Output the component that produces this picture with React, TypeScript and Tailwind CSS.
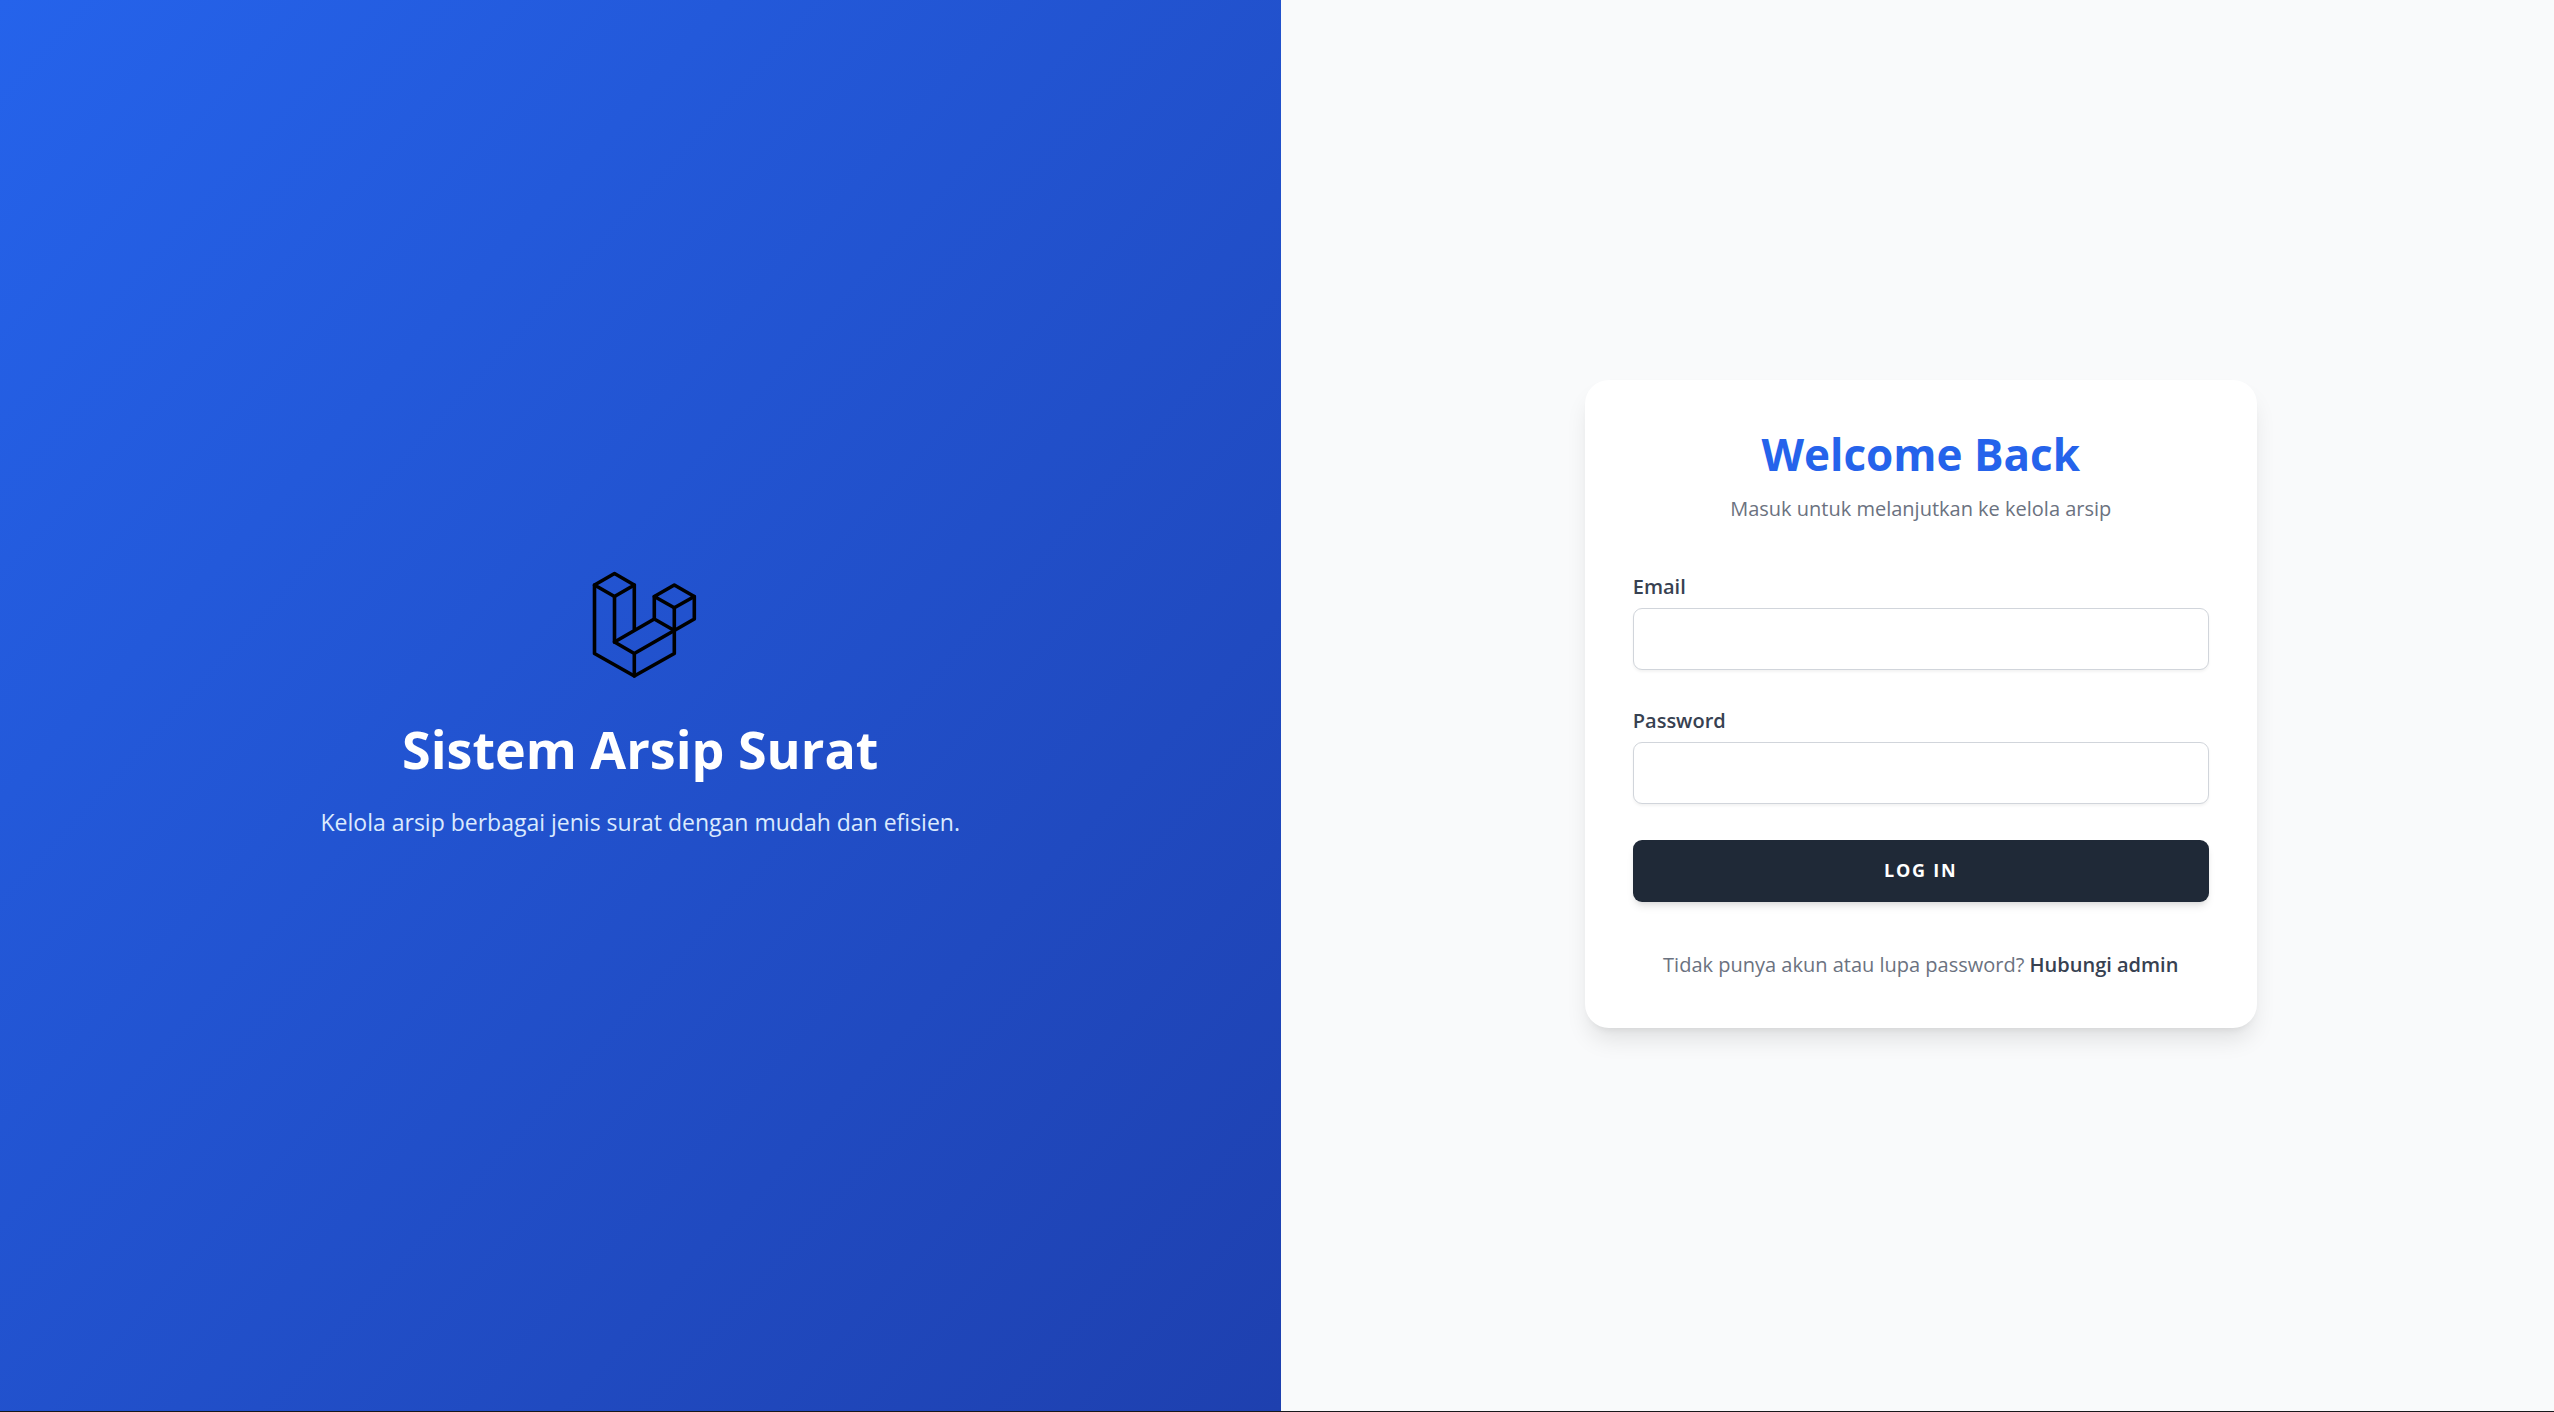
import React from "react";

function Logo() {
  return (
    <svg
      className="h-30 w-30"
      viewBox="0 0 120 120"
      fill="none"
      stroke="#000"
      strokeWidth="3.6"
      strokeLinecap="round"
      strokeLinejoin="round"
      aria-hidden="true"
    >
      <path d="M14.5 20 34.5 8.5 54.3 20 34.5 31.5Z" />
      <path d="M14.5 20V88.5L54.3 111 94.3 88.5V65.5" />
      <path d="M34.5 31.5V77L54.3 88.5V111M54.3 88.5 94.3 65.5" />
      <path d="M54.3 20V65.5M34.5 77 74.3 54" />
      <path d="M74.3 31.5 94.3 20 114.3 31.5 94.3 42.8Z" />
      <path d="M74.3 31.5V54L94.3 65.5 114.3 54V31.5M94.3 42.8V65.5" />
    </svg>
  );
}

function Field({ id, label, type }: { id: string; label: string; type: string }) {
  return (
    <div className="mb-9">
      <label htmlFor={id} className="mb-1.5 block text-[20px] leading-[30px] font-semibold text-[#374151]">
        {label}
      </label>
      <input
        id={id}
        name={id}
        type={type}
        className="block h-[62px] w-full rounded-[9px] border border-[#d1d5db] bg-white px-4 text-[20px] text-[#111827] shadow-[0_2px_3px_0_rgba(0,0,0,0.05)] outline-none focus:border-[#2563eb]"
      />
    </div>
  );
}

export default function App() {
  return (
    <div className="overflow-hidden border-b border-[#18181b] bg-[#f9fafb] font-['Segoe_UI','Open_Sans',sans-serif]">
      <main className="grid min-h-[calc(100vh-1px)] w-[calc(100%+7px)] grid-cols-2">
        <section className="flex flex-col items-center justify-center bg-linear-to-br/srgb from-[#2563eb] to-[#1e40af] px-12 pb-1 text-center">
          <Logo />
          <h1 className="mt-8 text-[52px] leading-[64px] font-bold text-white">Sistem Arsip Surat</h1>
          <p className="mt-5 text-[23px] leading-[42px] text-[#dbeafe]">
            Kelola arsip berbagai jenis surat dengan mudah dan efisien.
          </p>
        </section>

        <section className="flex items-center justify-center bg-[#f9fafb] pb-1">
          <div className="w-full max-w-2xl rounded-3xl bg-white p-12 shadow-[0_15px_23px_-4px_rgba(0,0,0,0.1),0_6px_9px_-6px_rgba(0,0,0,0.1)]">
            <div className="mb-12 text-center">
              <h2 className="text-[44px] leading-[52px] font-bold text-[#2563eb]">Welcome Back</h2>
              <p className="mt-3.5 text-[20px] leading-[30px] text-[#6b7280]">
                Masuk untuk melanjutkan ke kelola arsip
              </p>
            </div>
            <form onSubmit={(e) => e.preventDefault()}>
              <Field id="email" label="Email" type="email" />
              <Field id="password" label="Password" type="password" />
              <button
                type="submit"
                className="h-[62px] w-full rounded-[9px] bg-[#1f2937] text-[18px] font-bold tracking-widest text-white uppercase shadow-[0_6px_9px_-2px_rgba(0,0,0,0.1),0_3px_6px_-3px_rgba(0,0,0,0.1)]"
              >
                Log in
              </button>
            </form>
            <p className="mt-12 text-center text-[20px] leading-[30px] text-[#6b7280]">
              Tidak punya akun atau lupa password?{" "}
              <a href="#admin" className="font-semibold text-[#374151]">
                Hubungi admin
              </a>
            </p>
          </div>
        </section>
      </main>
    </div>
  );
}
